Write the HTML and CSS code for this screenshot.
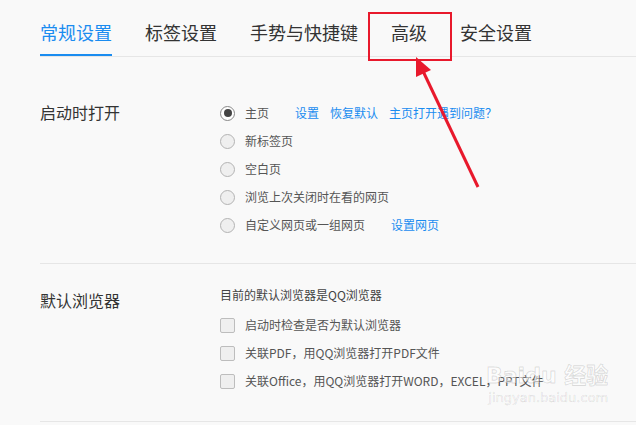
FILE: index.html
```html
<!DOCTYPE html>
<html lang="zh-CN">
<head>
    <meta charset="UTF-8">
    <title>设置</title>
    <link rel="stylesheet" href="styles.css">
</head>
<body>
<main>
    <nav class="tabs">
        <span class="tab active">常规设置</span>
        <span class="tab">标签设置</span>
        <span class="tab">手势与快捷键</span>
        <span class="tab">高级</span>
        <span class="tab">安全设置</span>
    </nav>

    <section class="group first">
        <div class="label">启动时打开</div>
        <div class="options">
            <div class="row"><i class="radio checked"></i><span class="text">主页</span>
                <span class="links"><a>设置</a><a>恢复默认</a><a>主页打开遇到问题？</a></span></div>
            <div class="row"><i class="radio"></i><span class="text">新标签页</span></div>
            <div class="row"><i class="radio"></i><span class="text">空白页</span></div>
            <div class="row"><i class="radio"></i><span class="text">浏览上次关闭时在看的网页</span></div>
            <div class="row"><i class="radio"></i><span class="text">自定义网页或一组网页</span>
                <span class="links"><a>设置网页</a></span></div>
        </div>
    </section>

    <section class="group second">
        <div class="label">默认浏览器</div>
        <div class="options">
            <div class="row intro"><span class="note">目前的默认浏览器是QQ浏览器</span></div>
            <div class="row"><i class="check"></i><span class="text">启动时检查是否为默认浏览器</span></div>
            <div class="row"><i class="check"></i><span class="text">关联PDF，用QQ浏览器打开PDF文件</span></div>
            <div class="row"><i class="check"></i><span class="text">关联Office，用QQ浏览器打开WORD，EXCEL，PPT文件</span></div>
        </div>
    </section>
</main>

<div class="mark-box"></div>
<svg class="mark-arrow" width="636" height="425" viewBox="0 0 636 425">
    <line x1="478" y1="187" x2="422" y2="69" stroke="#e8192c" stroke-width="3"/>
    <polygon points="416,57 431,70 416,77" fill="#e8192c"/>
</svg>

<div class="watermark">
    <span class="wm-logo">Bai<b>du</b> 经验</span>
    <span class="wm-url">jingyan.baidu.com</span>
</div>
</body>
</html>
```

FILE: styles.css
```css
body {
    margin: 0;
    background-color: #f9f9f9;
    font-family: "Noto Sans CJK SC", sans-serif;
    color: #333;
    overflow: hidden;
}

main {
    padding-left: 40px;
}

.tabs {
    display: flex;
    gap: 33px;
    border-bottom: 1px solid #e6e6e6;
}

.tab {
    font-size: 18px;
    line-height: 24px;
    padding: 20px 0 10px;
    border-bottom: 2px solid transparent;
    color: #333;
}

.tab.active {
    color: #1a8cf0;
    border-bottom-color: #1a8cf0;
}

.group {
    display: flex;
    border-bottom: 1px solid #e6e6e6;
}

.group.first {
    padding: 42px 0 24px;
}

.group.second {
    padding: 17px 0 26px;
}

.group.second .label {
    padding-top: 6px;
}

.label {
    width: 180px;
    font-size: 16px;
    line-height: 26px;
    color: #333;
}

.row {
    display: flex;
    align-items: center;
    height: 28px;
    font-size: 12px;
    line-height: 16px;
    color: #555;
}

.row.intro {
    height: 30px;
    align-items: flex-start;
    padding-top: 6px;
    box-sizing: border-box;
}

.note {
    color: #444;
}

.text {
    margin-left: 10px;
    padding-bottom: 1px;
}

.links {
    display: flex;
    gap: 11px;
    margin-left: 26px;
    padding-bottom: 1px;
}

.links a {
    color: #1a8cf0;
}

.radio {
    box-sizing: border-box;
    width: 15px;
    height: 15px;
    border: 1px solid #b3b3b3;
    border-radius: 50%;
    background-color: #efefef;
    display: flex;
    align-items: center;
    justify-content: center;
}

.radio.checked {
    background-color: #fff;
    border-color: #888;
}

.radio.checked::after {
    content: "";
    width: 8px;
    height: 8px;
    border-radius: 50%;
    background-color: #444;
}

.check {
    box-sizing: border-box;
    width: 15px;
    height: 15px;
    border: 1px solid #bdbdbd;
    border-radius: 2px;
    background-color: #efefef;
}

/* annotation layer */
.mark-box {
    position: absolute;
    left: 368px;
    top: 12px;
    width: 84px;
    height: 49px;
    box-sizing: border-box;
    border: 2px solid #e8192c;
}

.mark-arrow {
    position: absolute;
    left: 0;
    top: 0;
}

.watermark {
    position: absolute;
    left: 486px;
    top: 362px;
    display: flex;
    flex-direction: column;
    align-items: flex-end;
    font-family: "DejaVu Sans", "Noto Sans CJK SC", sans-serif;
    color: rgba(255, 255, 255, 0.5);
    -webkit-text-stroke: 1px rgba(0, 0, 0, 0.12);
}

.wm-logo {
    font-size: 22px;
    font-weight: bold;
    line-height: 28px;
}

.wm-logo b {
    font-weight: bold;
}

.wm-url {
    font-size: 13px;
    line-height: 16px;
    -webkit-text-stroke: 0.6px rgba(0, 0, 0, 0.12);
}
```
